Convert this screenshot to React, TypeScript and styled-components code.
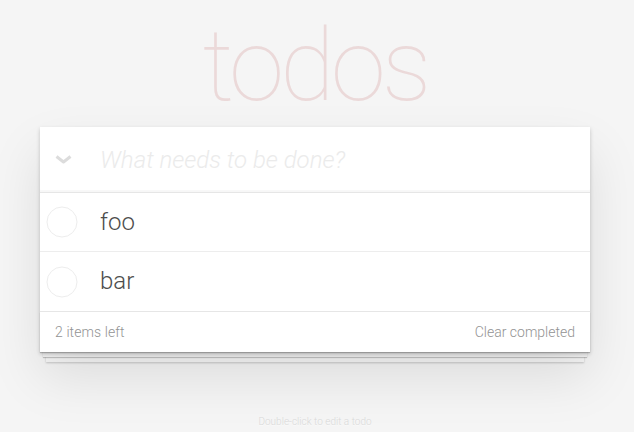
import React from "react";
import styled, { createGlobalStyle } from "styled-components";

const GlobalStyle = createGlobalStyle`
  html, body { margin: 0; padding: 0; }
  body {
    background: #f5f5f5;
    font-family: Roboto, "Helvetica Neue", Helvetica, Arial, sans-serif;
    font-size: 14px;
    line-height: 1.4em;
    font-weight: 300;
    color: #4d4d4d;
  }
  * { box-sizing: border-box; }
`;

const Page = styled.div`
  width: 550px;
  margin-left: 40px;
  padding-top: 16px;
`;

const Title = styled.h1`
  margin: 0 0 11px;
  font-size: 100px;
  line-height: 100px;
  font-weight: 100;
  letter-spacing: -4px;
  text-align: center;
  color: rgba(175, 47, 47, 0.14);
`;

const Card = styled.section`
  position: relative;
  background: #fff;
  box-shadow: 0 2px 4px 0 rgba(0, 0, 0, 0.2), 0 25px 50px 0 rgba(0, 0, 0, 0.1);
`;

const Header = styled.header`
  display: flex;
  align-items: center;
  height: 65px;
  box-shadow: inset 0 -2px 1px rgba(0, 0, 0, 0.03);
`;

const ToggleAll = styled.div`
  width: 60px;
  height: 65px;
  display: flex;
  align-items: center;
  padding-left: 15px;
  flex: none;
`;

const NewTodo = styled.input`
  flex: 1;
  min-width: 0;
  height: 65px;
  padding: 16px 16px 16px 0;
  border: none;
  outline: none;
  background: transparent;
  font-family: inherit;
  font-size: 24px;
  font-weight: 300;
  line-height: 1.4em;
  color: #4d4d4d;
  &::placeholder {
    font-style: italic;
    font-weight: 300;
    color: #ebebeb;
  }
`;

const List = styled.ul`
  margin: 0;
  padding: 0;
  list-style: none;
  border-top: 1px solid #e6e6e6;
`;

const Item = styled.li<{ $last?: boolean }>`
  display: flex;
  align-items: center;
  height: 59px;
  border-bottom: ${(p) => (p.$last ? "none" : "1px solid #ededed")};
`;

const Toggle = styled.div`
  width: 45px;
  flex: none;
  display: flex;
  justify-content: center;
  padding-right: 2px;
`;

const Label = styled.label`
  display: block;
  padding: 15px 60px 15px 15px;
  font-size: 24px;
  line-height: 1.2;
  font-weight: 300;
  color: #4d4d4d;
`;

const Footer = styled.footer`
  position: relative;
  display: flex;
  justify-content: space-between;
  height: 41px;
  padding: 10px 15px;
  border-top: 1px solid #e6e6e6;
  color: #939393;
  font-size: 14px;
  line-height: 20px;
  &::before {
    content: "";
    position: absolute;
    right: 0;
    bottom: 0;
    left: 0;
    height: 40px;
    overflow: hidden;
    z-index: -1;
    box-shadow: 0 1px 1px rgba(0, 0, 0, 0.2), 0 8px 0 -3px #f6f6f6,
      0 9px 1px -3px rgba(0, 0, 0, 0.2), 0 16px 0 -6px #f6f6f6,
      0 17px 2px -6px rgba(0, 0, 0, 0.2);
  }
`;

const Count = styled.span`
  letter-spacing: 0.1px;
`;

const ClearButton = styled.button`
  border: none;
  background: none;
  padding: 0;
  margin: 0;
  font: inherit;
  color: inherit;
  line-height: 20px;
  cursor: pointer;
`;

const Info = styled.footer`
  margin-top: 63px;
  text-align: center;
  font-size: 10px;
  line-height: 14px;
  color: #dadada;
  text-shadow: 0 1px 0 rgba(255, 255, 255, 0.5);
`;

const Chevron = () => (
  <svg width="17" height="9" viewBox="0 0 17 9">
    <polyline points="1.5,1.5 8.5,7 15.5,1.5" fill="none" stroke="#dcdcdc" strokeWidth="3" strokeLinejoin="round" />
  </svg>
);

const Circle = () => (
  <svg width="32" height="32" viewBox="0 0 32 32">
    <circle cx="16" cy="16" r="15" fill="none" stroke="#ededed" strokeWidth="1" />
  </svg>
);

const todos = ["foo", "bar"];

export default function App() {
  return (
    <>
      <GlobalStyle />
      <Page>
        <Title>todos</Title>
        <Card>
          <Header>
            <ToggleAll>
              <Chevron />
            </ToggleAll>
            <NewTodo placeholder="What needs to be done?" />
          </Header>
          <List>
            {todos.map((t, i) => (
              <Item key={t} $last={i === todos.length - 1}>
                <Toggle>
                  <Circle />
                </Toggle>
                <Label>{t}</Label>
              </Item>
            ))}
          </List>
          <Footer>
            <Count>2 items left</Count>
            <ClearButton>Clear completed</ClearButton>
          </Footer>
        </Card>
        <Info>Double-click to edit a todo</Info>
      </Page>
    </>
  );
}
